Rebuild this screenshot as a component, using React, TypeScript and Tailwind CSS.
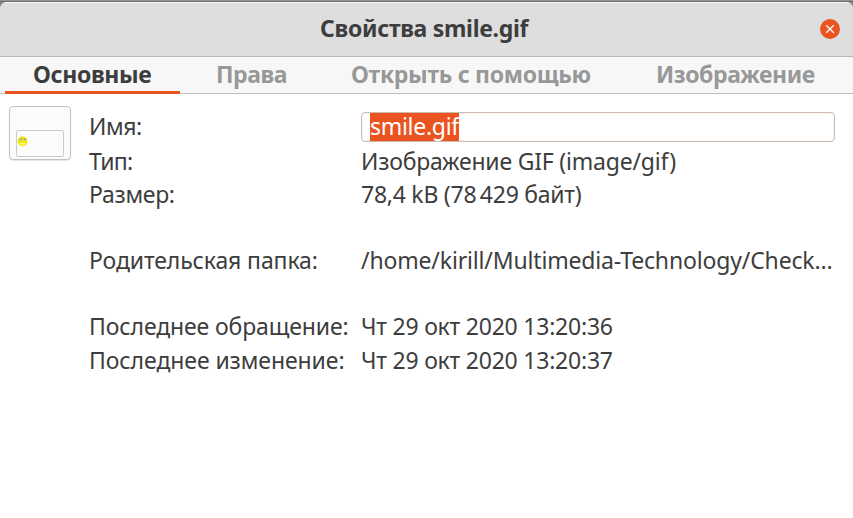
const tabs = [
  { label: "Основные", cls: "w-[175px] pl-[28px] tracking-[-0.35px] text-[#3d3d3d] border-[#e95420]" },
  { label: "Права", cls: "w-[142px] pl-[36px] tracking-[-0.45px] text-[#989898] border-transparent" },
  { label: "Открыть с помощью", cls: "w-[306px] pl-[29px] tracking-[-0.3px] text-[#989898] border-transparent" },
  { label: "Изображение", cls: "w-[220px] pl-[28px] tracking-[-0.42px] text-[#989898] border-transparent" },
];

const details = [
  { label: "Тип:", value: "Изображение GIF (image/gif)", cls: "h-[33px]", labelCls: "pl-px tracking-[-0.8px]", valueCls: "pl-px tracking-[-0.2px]" },
  { label: "Размер:", value: "78,4 kB (78\u2009429 байт)", cls: "h-[66px]", labelCls: "pl-px tracking-[-0.3px]", valueCls: "pl-px tracking-[-0.25px]" },
  { label: "Родительская папка:", value: "/home/kirill/Multimedia-Technology/Check…", cls: "h-[66px]", labelCls: "pl-px tracking-[-0.12px]", valueCls: "pl-px tracking-[-0.16px]" },
  { label: "Последнее обращение:", value: "Чт 29 окт 2020 13:20:36", cls: "h-[34px]", labelCls: "pl-px tracking-[-0.12px]", valueCls: "pl-px tracking-[-0.22px]" },
  { label: "Последнее изменение:", value: "Чт 29 окт 2020 13:20:37", cls: "h-[34px]", labelCls: "pl-px tracking-[-0.08px]", valueCls: "pl-px tracking-[-0.22px]" },
];

function Thumbnail() {
  return (
    <div className="mt-3 ml-[9px] flex h-[54px] w-[62px] shrink-0 items-end rounded-[4px] border border-[#c2c2c2] bg-[#fcfcfc] pb-[2px] pl-[6px] shadow-[0_1px_1px_rgba(0,0,0,0.1)]">
      <div className="h-[27px] w-[48px] rounded-[2px] border border-[#cbcac6] bg-[#fbfbfb]">
        <svg className="mt-[5px]" width="11" height="11" viewBox="0 0 11 11">
          <ellipse cx="5.6" cy="5.3" rx="4.9" ry="5" fill="#f0ea08" />
          <circle cx="3.6" cy="3.3" r="1.3" fill="#c4c5a4" />
          <circle cx="7.3" cy="3.3" r="1.3" fill="#c4c5a4" />
          <circle cx="4" cy="3.3" r=".65" fill="#6f6d88" />
          <circle cx="7.7" cy="3.3" r=".65" fill="#6f6d88" />
          <path d="M2.8 6.6Q5.6 7.8 8.4 6.6Q8 8.8 5.6 8.8Q3.2 8.8 2.8 6.6Z" fill="#fdfab8" />
        </svg>
      </div>
    </div>
  );
}

export default function App() {
  return (
    <div className="h-[518px] w-[853px] overflow-hidden bg-[#888] font-['Noto_Sans','Open_Sans',sans-serif] text-[23px] leading-[32px] whitespace-nowrap text-[#3d3d3d]">
      <div className="h-px bg-[#939393]" />
      <div className="h-px bg-[#6d6d6d]" />
      <div className="flex h-[516px] flex-col overflow-hidden rounded-t-[7px] bg-white">
        <header className="flex h-[55px] items-center border-t border-b border-t-[#f8f8f8] border-b-[#b8b8b8] bg-[#dedede] pr-[13px] pl-[320px]">
          <h1 className="flex-1 pb-[3px] font-bold tracking-[-0.3px]">Свойства smile.gif</h1>
          <button aria-label="Закрыть" className="mb-px flex size-[20px] items-center justify-center rounded-full bg-[#e95420]">
            <svg width="10" height="10" viewBox="0 0 10 10" stroke="#fff" strokeWidth="1.3">
              <path d="M1.2 1.2 8.8 8.8M8.8 1.2 1.2 8.8" />
            </svg>
          </button>
        </header>
        <nav className="flex h-[37px] shrink-0 bg-[#f7f7f7] pl-[5px] shadow-[inset_0_-1px_#c0c0c0]">
          {tabs.map((tab) => (
            <div key={tab.label} className={`shrink-0 border-b-3 pt-px font-bold ${tab.cls}`}>
              {tab.label}
            </div>
          ))}
        </nav>
        <main className="flex">
          <Thumbnail />
          <div className="pt-[18px] pl-[17px]">
            <div className="flex h-[33px] items-start">
              <div className="-mt-[2px] w-[273px] pl-px tracking-[-0.4px]">Имя:</div>
              <div className="flex h-[30px] w-[474px] rounded-[4px] border border-[#ccbab5] bg-white pl-[8px] shadow-[inset_0_0_0_1px_#fcf2ef]">
                <span className="h-[28px] bg-[#e95420] leading-[26px] tracking-[-0.28px] text-white">smile.gif</span>
              </div>
            </div>
            {details.map((row) => (
              <div key={row.label} className={`flex ${row.cls}`}>
                <div className={`w-[272px] ${row.labelCls}`}>{row.label}</div>
                <div className={row.valueCls}>{row.value}</div>
              </div>
            ))}
          </div>
        </main>
      </div>
    </div>
  );
}
